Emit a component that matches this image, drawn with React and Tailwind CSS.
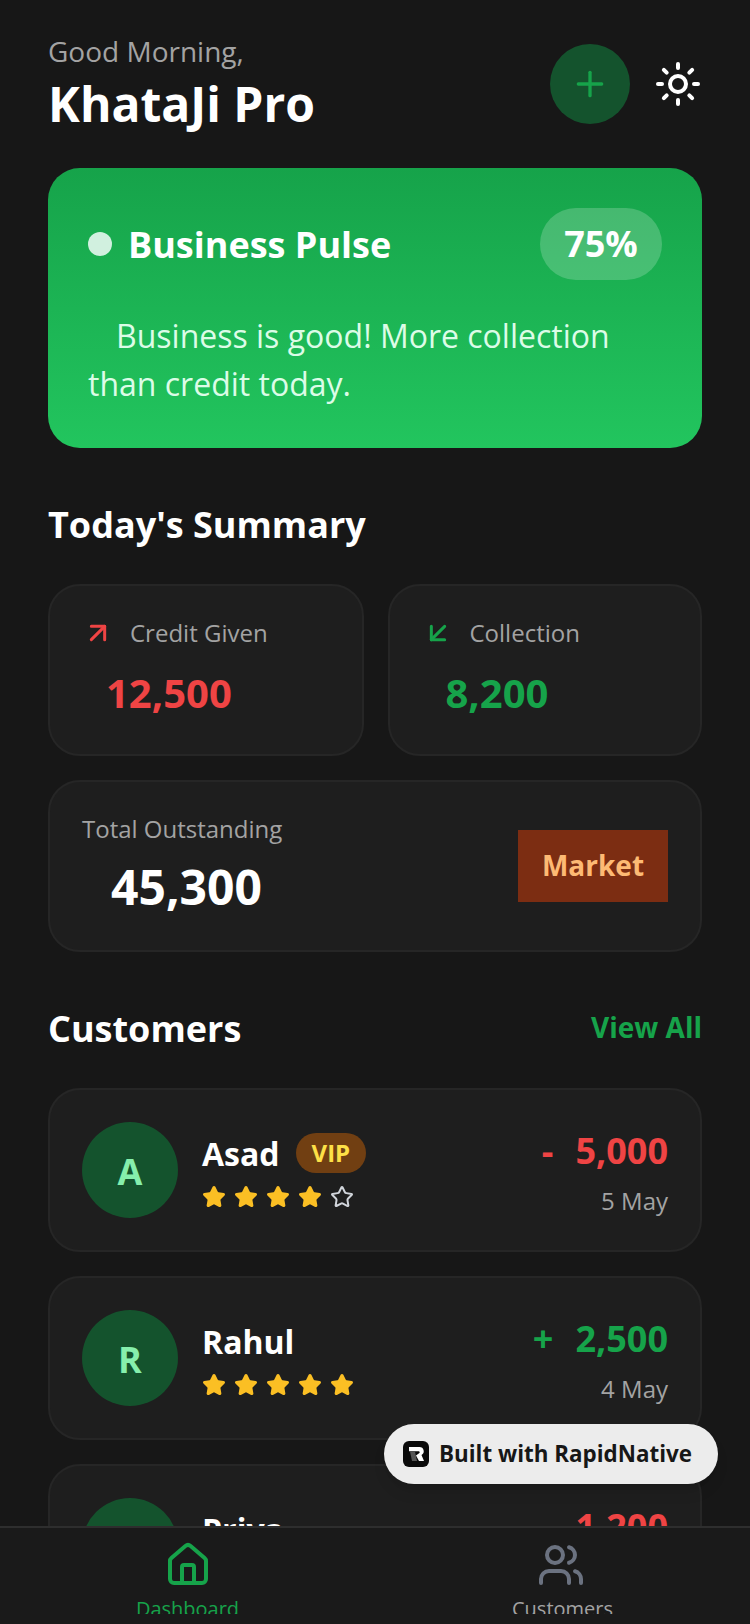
import { Plus, Sun, ArrowUpRight, ArrowDownLeft, Star, Home, Users } from 'lucide-react'

const customers = [
  { initial: 'A', name: 'Asad', vip: true, rating: 4, sign: '-', amount: '5,000', date: '5 May', color: 'text-[#ef4444]' },
  { initial: 'R', name: 'Rahul', vip: false, rating: 5, sign: '+', amount: '2,500', date: '4 May', color: 'text-[#16a34a]' },
  { initial: 'P', name: 'Priya', vip: false, rating: 3, sign: '-', amount: '1,200', date: '3 May', color: 'text-[#ef4444]' },
]

function Stat({ icon, label, value, color, className }) {
  return (
    <div className={`h-[172px] rounded-[32px] border-2 border-[#262626] bg-[#1e1e1e] pl-[32px] pt-[27px] ${className}`}>
      <div className="flex items-center gap-4 h-[40px]">
        {icon}
        <span className="text-[24px] text-[#a3a3a3]">{label}</span>
      </div>
      <div className={`mt-[10px] pl-[24px] text-[40px] leading-[60px] font-bold ${color}`}>{value}</div>
    </div>
  )
}

function CustomerCard({ c }) {
  return (
    <div className="h-[164px] shrink-0 rounded-[32px] border-2 border-[#262626] bg-[#1e1e1e] px-[32px] flex items-center">
      <div className="w-[96px] h-[96px] rounded-full bg-[#14532d] flex items-center justify-center pt-[3px] text-[36px] font-bold text-[#86efac]">
        {c.initial}
      </div>
      <div className="ml-6 flex-1">
        <div className="flex items-center gap-[16px] h-[44px]">
          <span className="pt-[2px] text-[32px] font-bold text-white">{c.name}</span>
          {c.vip && (
            <span className="h-[40px] px-[16px] rounded-full bg-[#713f12] text-[24px] font-bold text-[#fde047] flex items-center">
              VIP
            </span>
          )}
        </div>
        <div className="mt-[10px] flex gap-[8px]">
          {[1, 2, 3, 4, 5].map((n) => (
            <Star
              key={n}
              size={24}
              strokeWidth={2}
              className={n <= c.rating ? 'text-[#fbbf24] fill-[#fbbf24]' : 'text-[#d1d5db]'}
            />
          ))}
        </div>
      </div>
      <div className="mt-[3px] text-right">
        <div className={`text-[36px] leading-[54px] font-bold ${c.color}`}>
          {c.sign}
          <span className="ml-[22px]">{c.amount}</span>
        </div>
        <div className="mt-[5px] text-[24px] text-[#a3a3a3]">{c.date}</div>
      </div>
    </div>
  )
}

export default function App() {
  return (
    <div className="relative h-[1624px] w-[750px] overflow-hidden bg-[#171717] flex flex-col font-['Open_Sans',sans-serif]">
      <div className="flex-1 min-h-0 overflow-hidden px-[48px] pt-[32px]">
        <header className="flex items-center justify-between h-[104px]">
          <div>
            <div className="-mt-[2px] text-[28px] leading-[40px] text-[#a3a3a3]">Good Morning,</div>
            <div className="mt-[1px] text-[48px] leading-[64px] font-bold text-white">KhataJi Pro</div>
          </div>
          <div className="flex items-center gap-[24px]">
            <div className="w-[80px] h-[80px] rounded-full bg-[#14532d] flex items-center justify-center">
              <Plus size={40} strokeWidth={2} className="text-[#16a34a]" />
            </div>
            <Sun size={48} strokeWidth={2} className="text-white" />
          </div>
        </header>

        <section className="mt-[32px] h-[280px] rounded-[32px] bg-gradient-to-b from-[#16a34a] to-[#22c55e] p-[40px]">
          <div className="flex items-center justify-between h-[72px]">
            <div className="flex items-center gap-[16px]">
              <div className="w-[24px] h-[24px] rounded-full bg-[#d1f0df]" />
              <span className="pt-[2px] text-[36px] font-bold text-white">Business Pulse</span>
            </div>
            <div className="h-[72px] w-[122px] rounded-[36px] bg-white/20 flex items-center justify-center text-[36px] font-bold text-white">
              75%
            </div>
          </div>
          <p className="mt-[32px] text-[32px] leading-[48px] text-[#dcfce7] indent-[28px]">
            Business is good! More collection than credit today.
          </p>
        </section>

        <h2 className="mt-[50px] text-[36px] leading-[54px] font-bold text-white">Today's Summary</h2>

        <div className="mt-[32px] flex gap-[24px]">
          <Stat
            className="w-[315.5px] shrink-0"
            icon={<ArrowUpRight size={32} strokeWidth={2.25} className="text-[#ef4444]" />}
            label="Credit Given"
            value="12,500"
            color="text-[#ef4444]"
          />
          <Stat
            className="flex-1"
            icon={<ArrowDownLeft size={32} strokeWidth={2.25} className="text-[#16a34a]" />}
            label="Collection"
            value="8,200"
            color="text-[#16a34a]"
          />
        </div>

        <div className="mt-[24px] h-[172px] rounded-[32px] border-2 border-[#262626] bg-[#1e1e1e] px-[32px] flex items-center justify-between">
          <div className="pt-[2px]">
            <div className="text-[24px] leading-[36px] text-[#a3a3a3]">Total Outstanding</div>
            <div className="mt-[4px] pl-[29px] text-[48px] leading-[72px] font-bold text-white">45,300</div>
          </div>
          <div className="w-[150px] h-[72px] pb-[2px] bg-[#7c2d12] flex items-center justify-center text-[28px] font-bold text-[#fdba74]">
            Market
          </div>
        </div>

        <div className="mt-[50px] flex items-start justify-between h-[54px]">
          <h2 className="text-[36px] leading-[54px] font-bold text-white">Customers</h2>
          <span className="pt-[4px] text-[28px] leading-[42px] font-bold text-[#16a34a]">View All</span>
        </div>

        <div className="mt-[32px] flex flex-col gap-[24px]">
          {customers.map((c) => (
            <CustomerCard key={c.name} c={c} />
          ))}
        </div>
      </div>

      <nav className="h-[98px] shrink-0 border-t-2 border-[#2e2e2e] bg-[#1a1a1a] flex">
        <div className="flex-1 h-[86px] overflow-hidden flex flex-col items-center pt-[13px]">
          <Home size={48} strokeWidth={2} className="text-[#16a34a] shrink-0" />
          <span className="mt-[5px] text-[20px] leading-[30px] text-[#16a34a]">Dashboard</span>
        </div>
        <div className="flex-1 h-[86px] overflow-hidden flex flex-col items-center pt-[13px]">
          <Users size={48} strokeWidth={2} className="text-[#6b7280] shrink-0 -translate-x-[2px]" />
          <span className="mt-[5px] text-[20px] leading-[30px] text-[#a3a3a3]">Customers</span>
        </div>
      </nav>

      <div className="absolute left-[384px] top-[1424px] w-[334px] h-[60px] rounded-full bg-[#ececec] shadow-lg flex items-center pl-[19px] gap-[10px]">
        <svg width="26" height="26" viewBox="0 0 26 26">
          <rect width="26" height="26" rx="6" fill="#0a0a0a" />
          <path d="M6 6h10.5a4.2 4.2 0 0 1 2 7.9L21 20h-5l-3-5.5 3.4-2.5a1 1 0 0 0-.6-1.7H6z" fill="#fff" />
          <path d="M7 10.5h5l2 9.5H9z" fill="#555" />
        </svg>
        <span className="text-[22.4px] font-bold text-[#171717]">Built with RapidNative</span>
      </div>
    </div>
  )
}
